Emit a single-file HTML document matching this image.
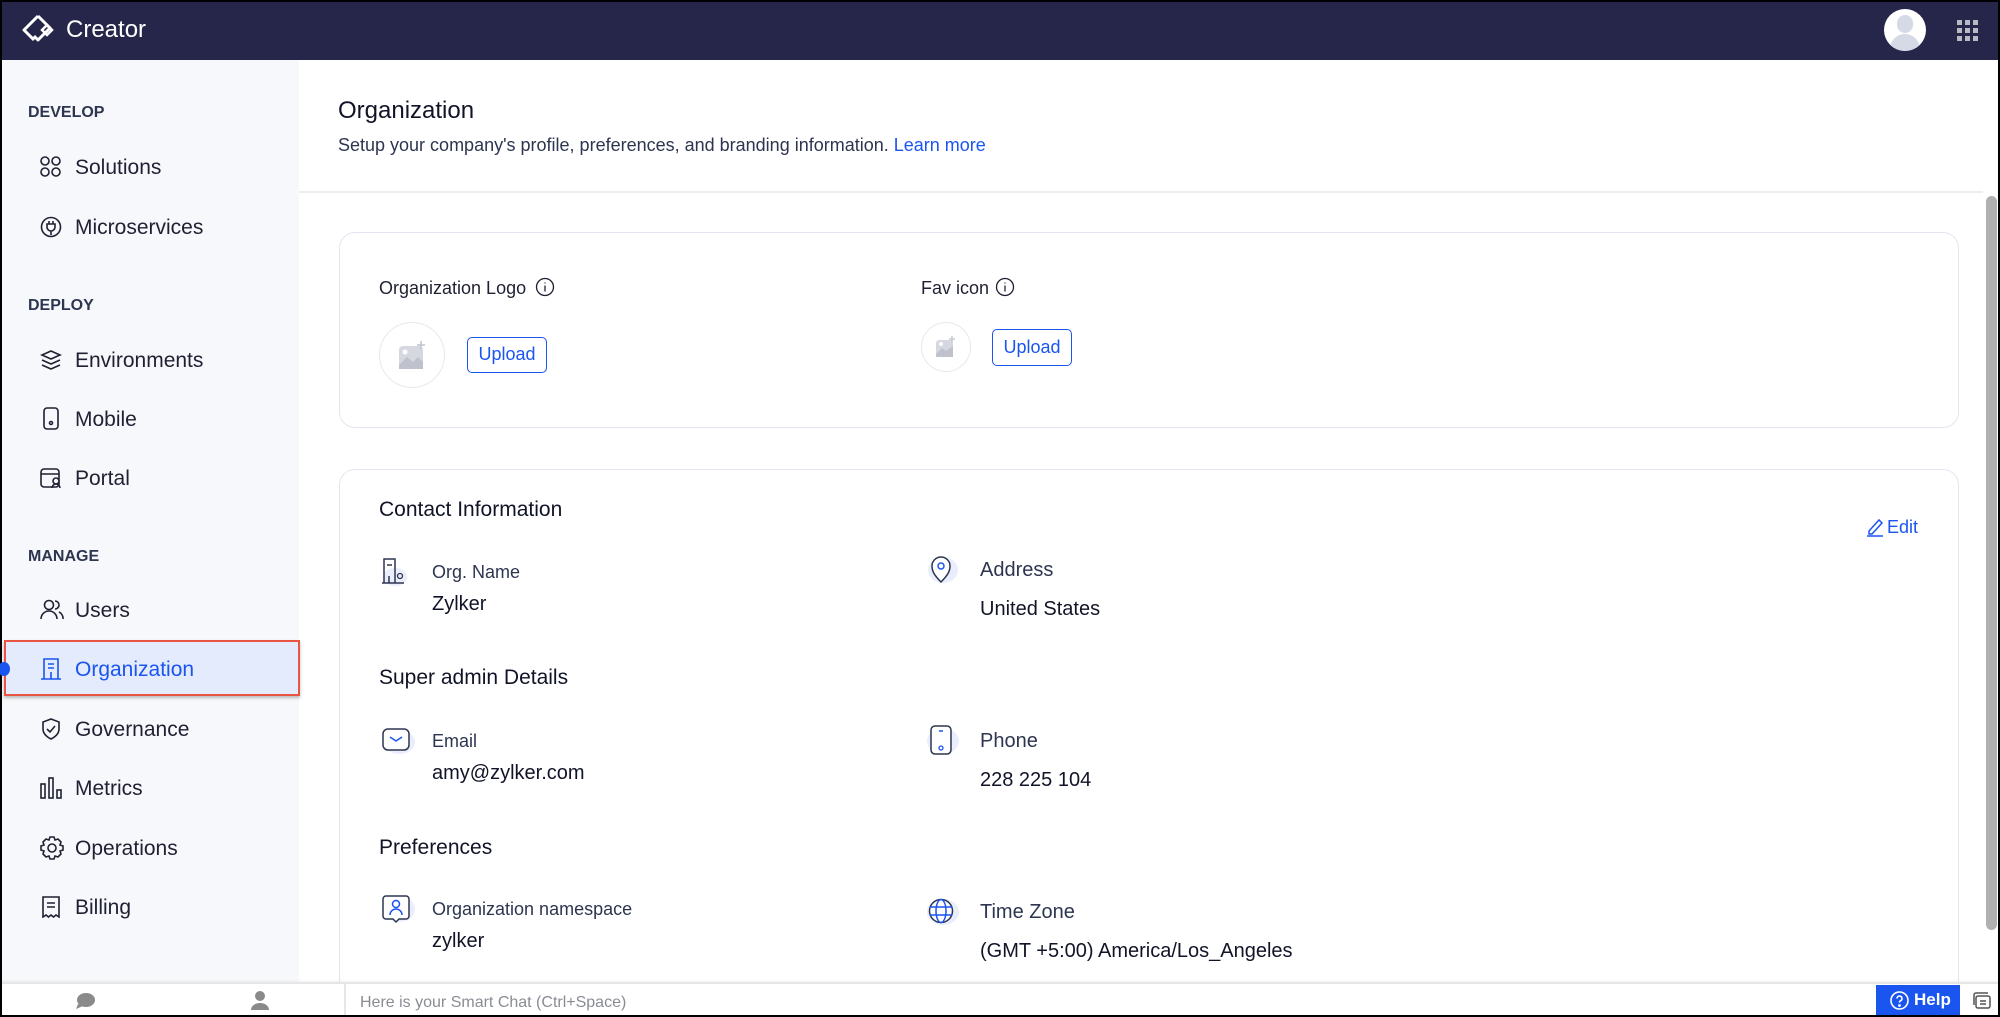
<!DOCTYPE html>
<html style="width:2000px;height:1017px;overflow:hidden"><head><meta charset="utf-8"><style>
*{margin:0;padding:0;box-sizing:border-box}
body{width:2000px;height:1017px;position:relative;overflow:hidden;background:#000;font-family:"Liberation Sans",sans-serif;color:#1f2133}
.t{position:absolute;white-space:nowrap;line-height:30px}
.ic{position:absolute}
</style></head><body>
<div style="position:absolute;left:2px;top:2px;width:1996px;height:1013px;background:#fff;overflow:hidden">
</div>
<!-- header -->
<div style="position:absolute;left:2px;top:2px;width:1996px;height:58px;background:#25264a"></div>
<svg class="ic" style="left:20px;top:12px" width="40" height="36" viewBox="0 0 40 36"><path d="M18 4 L4 18 L14 28 M18 4 L30 16 L18 28 L14 24" fill="none" stroke="#fff" stroke-width="3" stroke-linejoin="round"/><path d="M27 13 L32 18 L27 23 L22 18Z" fill="none" stroke="#fff" stroke-width="2.5"/></svg>
<div class="t" style="left:66px;top:15px;color:#fff;font-size:24px">Creator</div>
<div style="position:absolute;left:1884px;top:9px;width:42px;height:42px;border-radius:50%;background:#fff;overflow:hidden"><div style="position:absolute;left:13px;top:6px;width:16px;height:18px;border-radius:8px;background:#d6dae6"></div><div style="position:absolute;left:6px;top:25px;width:30px;height:20px;border-radius:15px 15px 0 0;background:#d6dae6"></div></div>
<svg class="ic" style="left:1957px;top:20px" width="22" height="22"><g fill="#b8b9c4"><rect x="0" y="0" width="5" height="5"/><rect x="8" y="0" width="5" height="5"/><rect x="16" y="0" width="5" height="5"/><rect x="0" y="8" width="5" height="5"/><rect x="8" y="8" width="5" height="5"/><rect x="16" y="8" width="5" height="5"/><rect x="0" y="16" width="5" height="5"/><rect x="8" y="16" width="5" height="5"/><rect x="16" y="16" width="5" height="5"/></g></svg>
<!-- sidebar -->
<div style="position:absolute;left:2px;top:60px;width:297px;height:922px;background:#f7f8fb"></div>
<div class="t" style="left:28px;top:98px;font-size:16px;font-weight:bold;color:#2d3550">DEVELOP</div>
<div class="t" style="left:28px;top:291px;font-size:16px;font-weight:bold;color:#2d3550">DEPLOY</div>
<div class="t" style="left:28px;top:542px;font-size:16px;font-weight:bold;color:#2d3550">MANAGE</div>
<div style="position:absolute;left:4px;top:640px;width:296px;height:56px;background:#e4ebfd;border:2px solid #e85545;box-shadow:0 2px 3px rgba(0,0,0,.25)"></div>
<div style="position:absolute;left:-2px;top:662px;width:12px;height:14px;border-radius:50%;background:#1a55f0"></div>
<div class="t" style="left:75px;top:153px;font-size:21px">Solutions</div>
<div class="t" style="left:75px;top:213px;font-size:21px">Microservices</div>
<div class="t" style="left:75px;top:346px;font-size:21px">Environments</div>
<div class="t" style="left:75px;top:405px;font-size:21px">Mobile</div>
<div class="t" style="left:75px;top:464px;font-size:21px">Portal</div>
<div class="t" style="left:75px;top:596px;font-size:21px">Users</div>
<div class="t" style="left:75px;top:655px;font-size:21px;color:#1a55f0">Organization</div>
<div class="t" style="left:75px;top:715px;font-size:21px">Governance</div>
<div class="t" style="left:75px;top:774px;font-size:21px">Metrics</div>
<div class="t" style="left:75px;top:834px;font-size:21px">Operations</div>
<div class="t" style="left:75px;top:893px;font-size:21px">Billing</div>
<svg class="ic" style="left:40px;top:156px" width="22" height="22" fill="none" stroke="#1f2133" stroke-width="1.6"><circle cx="5" cy="5" r="4"/><circle cx="16" cy="5" r="4"/><circle cx="5" cy="16" r="4"/><circle cx="16" cy="16" r="4"/></svg>
<svg class="ic" style="left:40px;top:216px" width="22" height="22" fill="none" stroke="#1f2133" stroke-width="1.6"><circle cx="11" cy="11" r="9.5"/><path d="M7 8h8v3a4 4 0 0 1-8 0z M11 15v4 M9 5v3 M13 5v3"/></svg>
<svg class="ic" style="left:40px;top:349px" width="22" height="22" fill="none" stroke="#1f2133" stroke-width="1.6"><path d="M11 2 L20 6 L11 10 L2 6Z M2 11 L11 15 L20 11 M2 16 L11 20 L20 16"/></svg>
<svg class="ic" style="left:42px;top:407px" width="18" height="24" fill="none" stroke="#1f2133" stroke-width="1.6"><rect x="2" y="1" width="14" height="21" rx="3"/><circle cx="9" cy="16" r="1.5"/></svg>
<svg class="ic" style="left:40px;top:467px" width="24" height="22" fill="none" stroke="#1f2133" stroke-width="1.6"><rect x="1" y="2" width="18" height="18" rx="3"/><path d="M1 7h18"/><circle cx="16" cy="14" r="3" fill="#f7f8fb"/><path d="M12 21a4 4 0 0 1 8 0"/></svg>
<svg class="ic" style="left:40px;top:599px" width="24" height="22" fill="none" stroke="#1f2133" stroke-width="1.6"><circle cx="9" cy="6" r="4.5"/><path d="M1 20a8 8 0 0 1 16 0 M15 2a4 4 0 0 1 0 8 M19 13a7 7 0 0 1 4 7"/></svg>
<svg class="ic" style="left:41px;top:658px" width="20" height="22" fill="none" stroke="#1a55f0" stroke-width="1.6"><path d="M3 21V1h14v20 M0 21h20 M7 6h6 M7 10h6 M10 14v7"/></svg>
<svg class="ic" style="left:41px;top:718px" width="20" height="22" fill="none" stroke="#1f2133" stroke-width="1.6"><path d="M10 1 L18 4 V11 C18 16 14 19 10 21 C6 19 2 16 2 11 V4Z M6 11 l3 3 l5 -6"/></svg>
<svg class="ic" style="left:40px;top:777px" width="22" height="22" fill="none" stroke="#1f2133" stroke-width="1.6"><rect x="1" y="7" width="4" height="14"/><rect x="9" y="1" width="4" height="20"/><rect x="17" y="13" width="4" height="8"/></svg>
<svg class="ic" style="left:40px;top:836px" width="24" height="24" fill="none" stroke="#1f2133" stroke-width="1.6"><circle cx="12" cy="12" r="4"/><path d="M10 1h4l1 3 3-1 3 3-1 3 3 1v4l-3 1 1 3-3 3-3-1-1 3h-4l-1-3-3 1-3-3 1-3-3-1v-4l3-1-1-3 3-3 3 1z"/></svg>
<svg class="ic" style="left:41px;top:896px" width="20" height="22" fill="none" stroke="#1f2133" stroke-width="1.6"><path d="M2 1h16v20l-3-2-2.5 2-2.5-2-2.5 2-2.5-2-3 2z M6 7h8 M6 11h8"/></svg>
<!-- main header -->
<div class="t" style="left:338px;top:96px;font-size:24px;color:#111427">Organization</div>
<div class="t" style="left:338px;top:130px;font-size:18px;color:#2d3550">Setup your company's profile, preferences, and branding information. <span style="color:#1a55f0">Learn more</span></div>
<div style="position:absolute;left:299px;top:191px;width:1684px;height:2px;background:#eceef2"></div>
<!-- scrollbar -->
<div style="position:absolute;left:1986px;top:196px;width:11px;height:734px;border-radius:6px;background:#b0b0b0"></div>
<!-- card1 -->
<div style="position:absolute;left:339px;top:232px;width:1620px;height:196px;border:1.5px solid #e3e6f0;border-radius:16px"></div>
<div class="t" style="left:379px;top:273px;font-size:18px;color:#1f2133">Organization Logo</div>
<svg class="ic" style="left:535px;top:277px" width="20" height="20" fill="none" stroke="#1f2133" stroke-width="1.3"><circle cx="10" cy="10" r="8.5"/><path d="M10 8.5v6 M10 5.5v1"/></svg>
<div class="t" style="left:921px;top:273px;font-size:18px;color:#1f2133">Fav icon</div>
<svg class="ic" style="left:995px;top:277px" width="20" height="20" fill="none" stroke="#1f2133" stroke-width="1.3"><circle cx="10" cy="10" r="8.5"/><path d="M10 8.5v6 M10 5.5v1"/></svg>
<div style="position:absolute;left:379px;top:322px;width:66px;height:66px;border-radius:50%;border:1.5px solid #e6e8ee;background:#fff"></div>
<svg class="ic" style="left:397px;top:341px" width="30" height="30"><rect x="2" y="5" width="24" height="23" rx="4" fill="#d6d8e0"/><path d="M2 24 L10 16 L16 21 L21 16 L26 21 V28 H2Z" fill="#bfc2cc"/><circle cx="8" cy="11" r="2.5" fill="#fff"/><path d="M24 0v8 M20 4h8" stroke="#bfc2cc" stroke-width="1.5"/></svg>
<div style="position:absolute;left:467px;top:337px;width:80px;height:36px;border:1.5px solid #1a55f0;border-radius:5px;color:#1a55f0;font-size:18px;text-align:center;line-height:33px">Upload</div>
<div style="position:absolute;left:921px;top:322px;width:50px;height:50px;border-radius:50%;border:1.5px solid #e6e8ee"></div>
<svg class="ic" style="left:935px;top:336px" width="22" height="22"><rect x="1" y="4" width="17" height="17" rx="3" fill="#d6d8e0"/><path d="M1 18 L7 12 L11 15 L18 10 V21 H1Z" fill="#bfc2cc"/><circle cx="6" cy="8" r="2" fill="#fff"/><path d="M17 0v6 M14 3h6" stroke="#bfc2cc" stroke-width="1.3"/></svg>
<div style="position:absolute;left:992px;top:329px;width:80px;height:37px;border:1.5px solid #1a55f0;border-radius:5px;color:#1a55f0;font-size:18px;text-align:center;line-height:34px">Upload</div>
<!-- card2 -->
<div style="position:absolute;left:339px;top:469px;width:1620px;height:530px;border:1.5px solid #e3e6f0;border-bottom:none;border-radius:16px 16px 0 0"></div>
<div class="t" style="left:379px;top:495px;font-size:21px;color:#111427">Contact Information</div>
<svg class="ic" style="left:1866px;top:517px" width="18" height="20" fill="none" stroke="#1a55f0" stroke-width="1.5"><path d="M3 14 L13 3 L16 6 L6 17 H3Z M1 19h16"/></svg>
<div class="t" style="left:1887px;top:512px;font-size:18px;color:#1a55f0">Edit</div>
<div class="t" style="left:379px;top:663px;font-size:21px;color:#111427">Super admin Details</div>
<div class="t" style="left:379px;top:833px;font-size:21px;color:#111427">Preferences</div>
<!-- field labels -->
<div class="t" style="left:432px;top:557px;font-size:18px;color:#2d3550">Org. Name</div>
<div class="t" style="left:432px;top:589px;font-size:20px;color:#111427">Zylker</div>
<div class="t" style="left:980px;top:555px;font-size:20px;color:#2d3550">Address</div>
<div class="t" style="left:980px;top:594px;font-size:20px;color:#111427">United States</div>
<div class="t" style="left:432px;top:726px;font-size:18px;color:#2d3550">Email</div>
<div class="t" style="left:432px;top:758px;font-size:20px;color:#111427">amy@zylker.com</div>
<div class="t" style="left:980px;top:726px;font-size:20px;color:#2d3550">Phone</div>
<div class="t" style="left:980px;top:765px;font-size:20px;color:#111427">228 225 104</div>
<div class="t" style="left:432px;top:894px;font-size:18px;color:#2d3550">Organization namespace</div>
<div class="t" style="left:432px;top:926px;font-size:20px;color:#111427">zylker</div>
<div class="t" style="left:980px;top:897px;font-size:20px;color:#2d3550">Time Zone</div>
<div class="t" style="left:980px;top:936px;font-size:20px;color:#111427">(GMT +5:00) America/Los_Angeles</div>
<!-- field icons -->
<svg class="ic" style="left:381px;top:557px" width="34" height="30" fill="none"><ellipse cx="14" cy="20" rx="12" ry="9" fill="#eaeefc"/><path d="M3 26V2h11v24 M14 22V20 M1 26h22 M6 8h5 M8 19v7" stroke="#2d3550" stroke-width="1.5"/><circle cx="19" cy="19" r="2.5" stroke="#2d3550" stroke-width="1.3"/></svg>
<svg class="ic" style="left:925px;top:554px" width="36" height="32" fill="none"><ellipse cx="18" cy="16" rx="15" ry="13" fill="#eaeefc"/><path d="M16 28 C9 21 7 17 7 12 a9 9 0 0 1 18 0 c0 5 -2 9 -9 16z" fill="#fff" stroke="#2d3550" stroke-width="1.5"/><circle cx="16" cy="12" r="3" stroke="#1a55f0" stroke-width="1.5"/></svg>
<svg class="ic" style="left:381px;top:727px" width="36" height="28" fill="none"><ellipse cx="18" cy="15" rx="16" ry="12" fill="#eaeefc"/><rect x="2" y="2" width="26" height="21" rx="5" fill="#fff" stroke="#2d3550" stroke-width="1.5"/><path d="M9 10 l6 4 l6 -4" stroke="#1a55f0" stroke-width="1.5"/></svg>
<svg class="ic" style="left:925px;top:724px" width="36" height="32" fill="none"><ellipse cx="18" cy="17" rx="16" ry="13" fill="#eaeefc"/><rect x="6" y="2" width="20" height="28" rx="4" fill="#fff" stroke="#2d3550" stroke-width="1.5"/><path d="M14 7h4" stroke="#1a55f0" stroke-width="1.5"/><circle cx="16" cy="24" r="2" stroke="#1a55f0" stroke-width="1.3"/></svg>
<svg class="ic" style="left:381px;top:894px" width="36" height="34" fill="none"><ellipse cx="18" cy="15" rx="16" ry="13" fill="#eaeefc"/><path d="M5 2h20a3 3 0 0 1 3 3v17a3 3 0 0 1-3 3h-7l-3 3-3-3H5a3 3 0 0 1-3-3V5a3 3 0 0 1 3-3z" fill="#fff" stroke="#2d3550" stroke-width="1.5"/><circle cx="15" cy="10" r="3.5" stroke="#1a55f0" stroke-width="1.5"/><path d="M9 21a6 6 0 0 1 12 0" stroke="#1a55f0" stroke-width="1.5"/></svg>
<svg class="ic" style="left:925px;top:897px" width="36" height="30" fill="none"><ellipse cx="18" cy="15" rx="16" ry="13" fill="#eaeefc"/><circle cx="16" cy="14" r="11.5" fill="#fff" stroke="#2d3550" stroke-width="1.5"/><ellipse cx="16" cy="14" rx="5" ry="11.5" stroke="#1a55f0" stroke-width="1.5"/><path d="M4.5 10h23 M4.5 18h23" stroke="#1a55f0" stroke-width="1.5"/></svg>
<!-- bottom bar -->
<div style="position:absolute;left:2px;top:982px;width:1996px;height:33px;background:#fff;border-top:2px solid #e6e6e6;box-shadow:0 -1px 3px rgba(0,0,0,.06)"></div>
<div style="position:absolute;left:344px;top:983px;width:2px;height:32px;background:#e6e6e6"></div>
<svg class="ic" style="left:74px;top:992px" width="22" height="18"><ellipse cx="12" cy="8" rx="9" ry="7" fill="#8a8a8a"/><path d="M4 12 L2 17 L9 14Z" fill="#8a8a8a"/></svg>
<svg class="ic" style="left:250px;top:990px" width="20" height="20"><circle cx="10" cy="6" r="5" fill="#8a8a8a"/><path d="M1 20a9 7 0 0 1 18 0z" fill="#8a8a8a"/></svg>
<div class="t" style="left:360px;top:988px;font-size:16px;line-height:30px;color:#8a8c94">Here is your Smart Chat (Ctrl+Space)</div>
<div style="position:absolute;left:1876px;top:985px;width:84px;height:30px;background:#1a55f0"></div>
<svg class="ic" style="left:1890px;top:991px" width="19" height="19" fill="none" stroke="#fff" stroke-width="1.6"><circle cx="9.5" cy="9.5" r="8.5"/><path d="M7 7.5a2.5 2.5 0 1 1 3.5 2.3c-.8.4-1 .9-1 1.7"/><circle cx="9.5" cy="14.5" r=".6" fill="#fff"/></svg>
<div class="t" style="left:1914px;top:985px;font-size:17px;font-weight:bold;color:#fff">Help</div>
<svg class="ic" style="left:1972px;top:992px" width="20" height="18" fill="none" stroke="#555" stroke-width="1.5"><rect x="4" y="4" width="14" height="12" rx="2"/><path d="M2 13V3a2 2 0 0 1 2-2h12 M8 9h6 M8 12h6"/></svg>
</body></html>
